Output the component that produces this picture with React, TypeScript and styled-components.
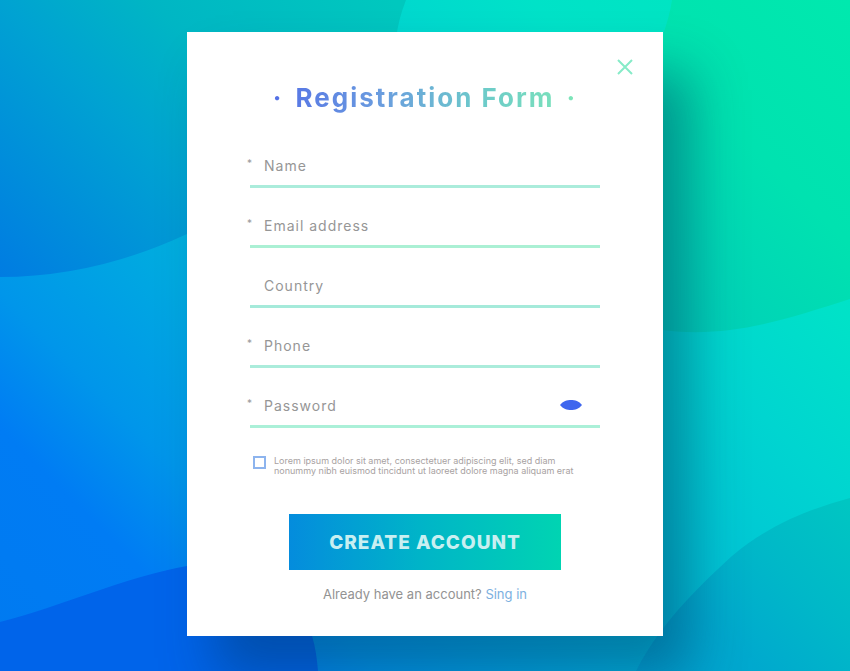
import React, { useState } from 'react';
import styled, { createGlobalStyle } from 'styled-components';

const GlobalStyle = createGlobalStyle`
  *, *::before, *::after { box-sizing: border-box; }
  body {
    margin: 0;
    font-family: Inter, 'Open Sans', sans-serif;
    background: #0096dd;
  }
`;

const Page = styled.main`
  position: relative;
  isolation: isolate;
  overflow: hidden;
  min-height: 100vh;
  display: flex;
  flex-direction: column;
  align-items: center;
  padding: 32px 16px;
`;

const Backdrop = styled.svg`
  position: absolute;
  inset: 0;
  z-index: -1;
  width: 100%;
  height: 100%;
`;

const Card = styled.section`
  width: 100%;
  max-width: 476px;
  padding: 24px 28px 32px;
  background: #fff;
  box-shadow: 28px 40px 50px rgba(0, 50, 90, 0.42);
`;

const CardTop = styled.div`
  display: flex;
  justify-content: flex-end;
`;

const IconButton = styled.button`
  display: grid;
  place-items: center;
  padding: 0;
  border: 0;
  background: none;
  cursor: pointer;
`;

const Title = styled.h1`
  display: flex;
  align-items: center;
  justify-content: center;
  gap: 12px;
  width: fit-content;
  margin: 6px auto 14px;
  font-size: 26px;
  line-height: 32px;
  font-weight: 700;
  letter-spacing: 2px;
  color: transparent;
  background: linear-gradient(90deg, #5470e6, #6a9cdf 35%, #6ccaca 68%, #7ee6b8);
  background-clip: text;
  -webkit-background-clip: text;
`;

const Form = styled.form`
  display: flex;
  flex-direction: column;
  padding: 0 35px;
`;

const Field = styled.div<{ $line: string }>`
  display: grid;
  grid-template-columns: 14px 1fr auto;
  align-items: start;
  height: 60px;
  padding-top: 19px;
  border-bottom: 3px solid ${(p) => p.$line};
`;

const Required = styled.label`
  margin-left: -3px;
  padding-top: 6px;
  font-size: 10px;
  line-height: 20px;
  color: #999;
`;

const TextInput = styled.input`
  min-width: 0;
  width: 100%;
  height: 36px;
  padding: 0;
  border: 0;
  outline: 0;
  background: none;
  font-family: inherit;
  font-size: 14px;
  letter-spacing: 1px;
  color: #555;
  &::placeholder { color: #969696; opacity: 1; }
`;

const EyeButton = styled(IconButton)`
  height: 36px;
  margin-right: 18px;
`;

const Terms = styled.div`
  display: flex;
  gap: 8px;
  margin-top: 28px;
  padding-left: 3px;
`;

const Checkbox = styled.input`
  appearance: none;
  flex: none;
  width: 13px;
  height: 13px;
  margin: 0;
  border: 2px solid #8db4ee;
  background: #fff;
  &:checked { background: #8db4ee; }
`;

const TermsText = styled.label`
  font-size: 9px;
  line-height: 10px;
  color: #a8a2a2;
`;

const Submit = styled.button`
  align-self: center;
  width: 272px;
  max-width: 100%;
  height: 56px;
  margin-top: 38px;
  border: 0;
  background: linear-gradient(90deg, #048cdd, #00b4c8 48%, #00d4b2);
  font-family: inherit;
  font-size: 19px;
  font-weight: 800;
  letter-spacing: 1px;
  color: #c8eff1;
  cursor: pointer;
`;

const Footer = styled.p`
  margin: 14px 0 0;
  font-size: 13px;
  line-height: 20px;
  text-align: center;
  color: #939393;
`;

const SignIn = styled.a`
  color: #7cb0e0;
  text-decoration: none;
`;

const fields = [
  { id: 'name', label: 'Name', type: 'text', required: true, line: '#abecdb' },
  { id: 'email', label: 'Email address', type: 'email', required: true, line: '#abf0d4' },
  { id: 'country', label: 'Country', type: 'text', required: false, line: '#a5eada' },
  { id: 'phone', label: 'Phone', type: 'tel', required: true, line: '#abecdb' },
  { id: 'password', label: 'Password', type: 'password', required: true, line: '#abf0d8' },
];

function Waves() {
  const diagonal = {
    gradientUnits: 'userSpaceOnUse' as const,
    x1: 0,
    y1: 671,
    x2: 760,
    y2: -89,
  };
  return (
    <Backdrop viewBox="0 0 850 671" preserveAspectRatio="none" aria-hidden="true">
      <defs>
        <linearGradient id="base" {...diagonal}>
          <stop offset="0" stopColor="#007af0" />
          <stop offset="0.16" stopColor="#007cf4" />
          <stop offset="0.25" stopColor="#0096ea" />
          <stop offset="0.4" stopColor="#00aede" />
          <stop offset="0.52" stopColor="#00c2d6" />
          <stop offset="0.67" stopColor="#00d5d0" />
          <stop offset="0.79" stopColor="#00e2c8" />
          <stop offset="1" stopColor="#00e8bc" />
        </linearGradient>
        <linearGradient id="topLeft" {...diagonal}>
          <stop offset="0.26" stopColor="#007ce2" />
          <stop offset="0.44" stopColor="#00a2d2" />
          <stop offset="0.54" stopColor="#00b6c4" />
          <stop offset="0.7" stopColor="#00c8be" />
        </linearGradient>
        <linearGradient id="topRight" {...diagonal}>
          <stop offset="0.66" stopColor="#00cdba" />
          <stop offset="0.84" stopColor="#00e2b0" />
          <stop offset="1" stopColor="#00e9ae" />
        </linearGradient>
        <linearGradient id="bottomRight" {...diagonal}>
          <stop offset="0.38" stopColor="#009fd8" />
          <stop offset="0.5" stopColor="#00a9ce" />
          <stop offset="0.58" stopColor="#00b8c8" />
          <stop offset="0.67" stopColor="#00c6c2" />
        </linearGradient>
      </defs>
      <rect width="850" height="671" fill="url(#base)" />
      <path d="M0 0H406Q398 20 396 40C370 130 270 200 187 234Q95 277 0 277Z" fill="url(#topLeft)" />
      <path d="M672 0Q664 60 560 240Q600 320 663 330C730 339 790 318 850 299V0Z" fill="url(#topRight)" />
      <path d="M0 622C60 607 125 577 187 566C270 555 314 600 318 671H0Z" fill="#0064ea" />
      <path d="M636 671C662 620 705 581 732 556C770 524 810 509 850 498V671Z" fill="url(#bottomRight)" />
    </Backdrop>
  );
}

export default function App() {
  const [visible, setVisible] = useState(false);
  return (
    <>
      <GlobalStyle />
      <Page>
        <Waves />
        <Card aria-labelledby="form-title">
          <CardTop>
            <IconButton type="button" aria-label="Close">
              <svg width="20" height="20" viewBox="0 0 20 20" fill="none" stroke="#86ebc8" strokeWidth="2">
                <path d="M3 4L17 18M17 4L3 18" />
              </svg>
            </IconButton>
          </CardTop>
          <Title id="form-title">
            <span>·</span>
            <span>Registration Form</span>
            <span>·</span>
          </Title>
          <Form onSubmit={(e) => e.preventDefault()}>
            {fields.map((f) => (
              <Field key={f.id} $line={f.line}>
                <Required htmlFor={f.id}>{f.required ? '*' : ''}</Required>
                <TextInput
                  id={f.id}
                  type={f.id === 'password' && visible ? 'text' : f.type}
                  placeholder={f.label}
                  aria-label={f.label}
                  required={f.required}
                />
                {f.id === 'password' && (
                  <EyeButton type="button" aria-label="Show password" onClick={() => setVisible(!visible)}>
                    <svg width="22" height="12" viewBox="0 0 22 12">
                      <path d="M0 6C3 2 7 1 11 1S19 2 22 6C19 10 15 11 11 11S3 10 0 6Z" fill="#3f66ee" />
                    </svg>
                  </EyeButton>
                )}
              </Field>
            ))}
            <Terms>
              <Checkbox id="terms" type="checkbox" />
              <TermsText htmlFor="terms">
                Lorem ipsum dolor sit amet, consectetuer adipiscing elit, sed diam
                <br />
                nonummy nibh euismod tincidunt ut laoreet dolore magna aliquam erat
              </TermsText>
            </Terms>
            <Submit type="submit">CREATE ACCOUNT</Submit>
            <Footer>
              Already have an account? <SignIn href="#signin">Sing in</SignIn>
            </Footer>
          </Form>
        </Card>
      </Page>
    </>
  );
}
